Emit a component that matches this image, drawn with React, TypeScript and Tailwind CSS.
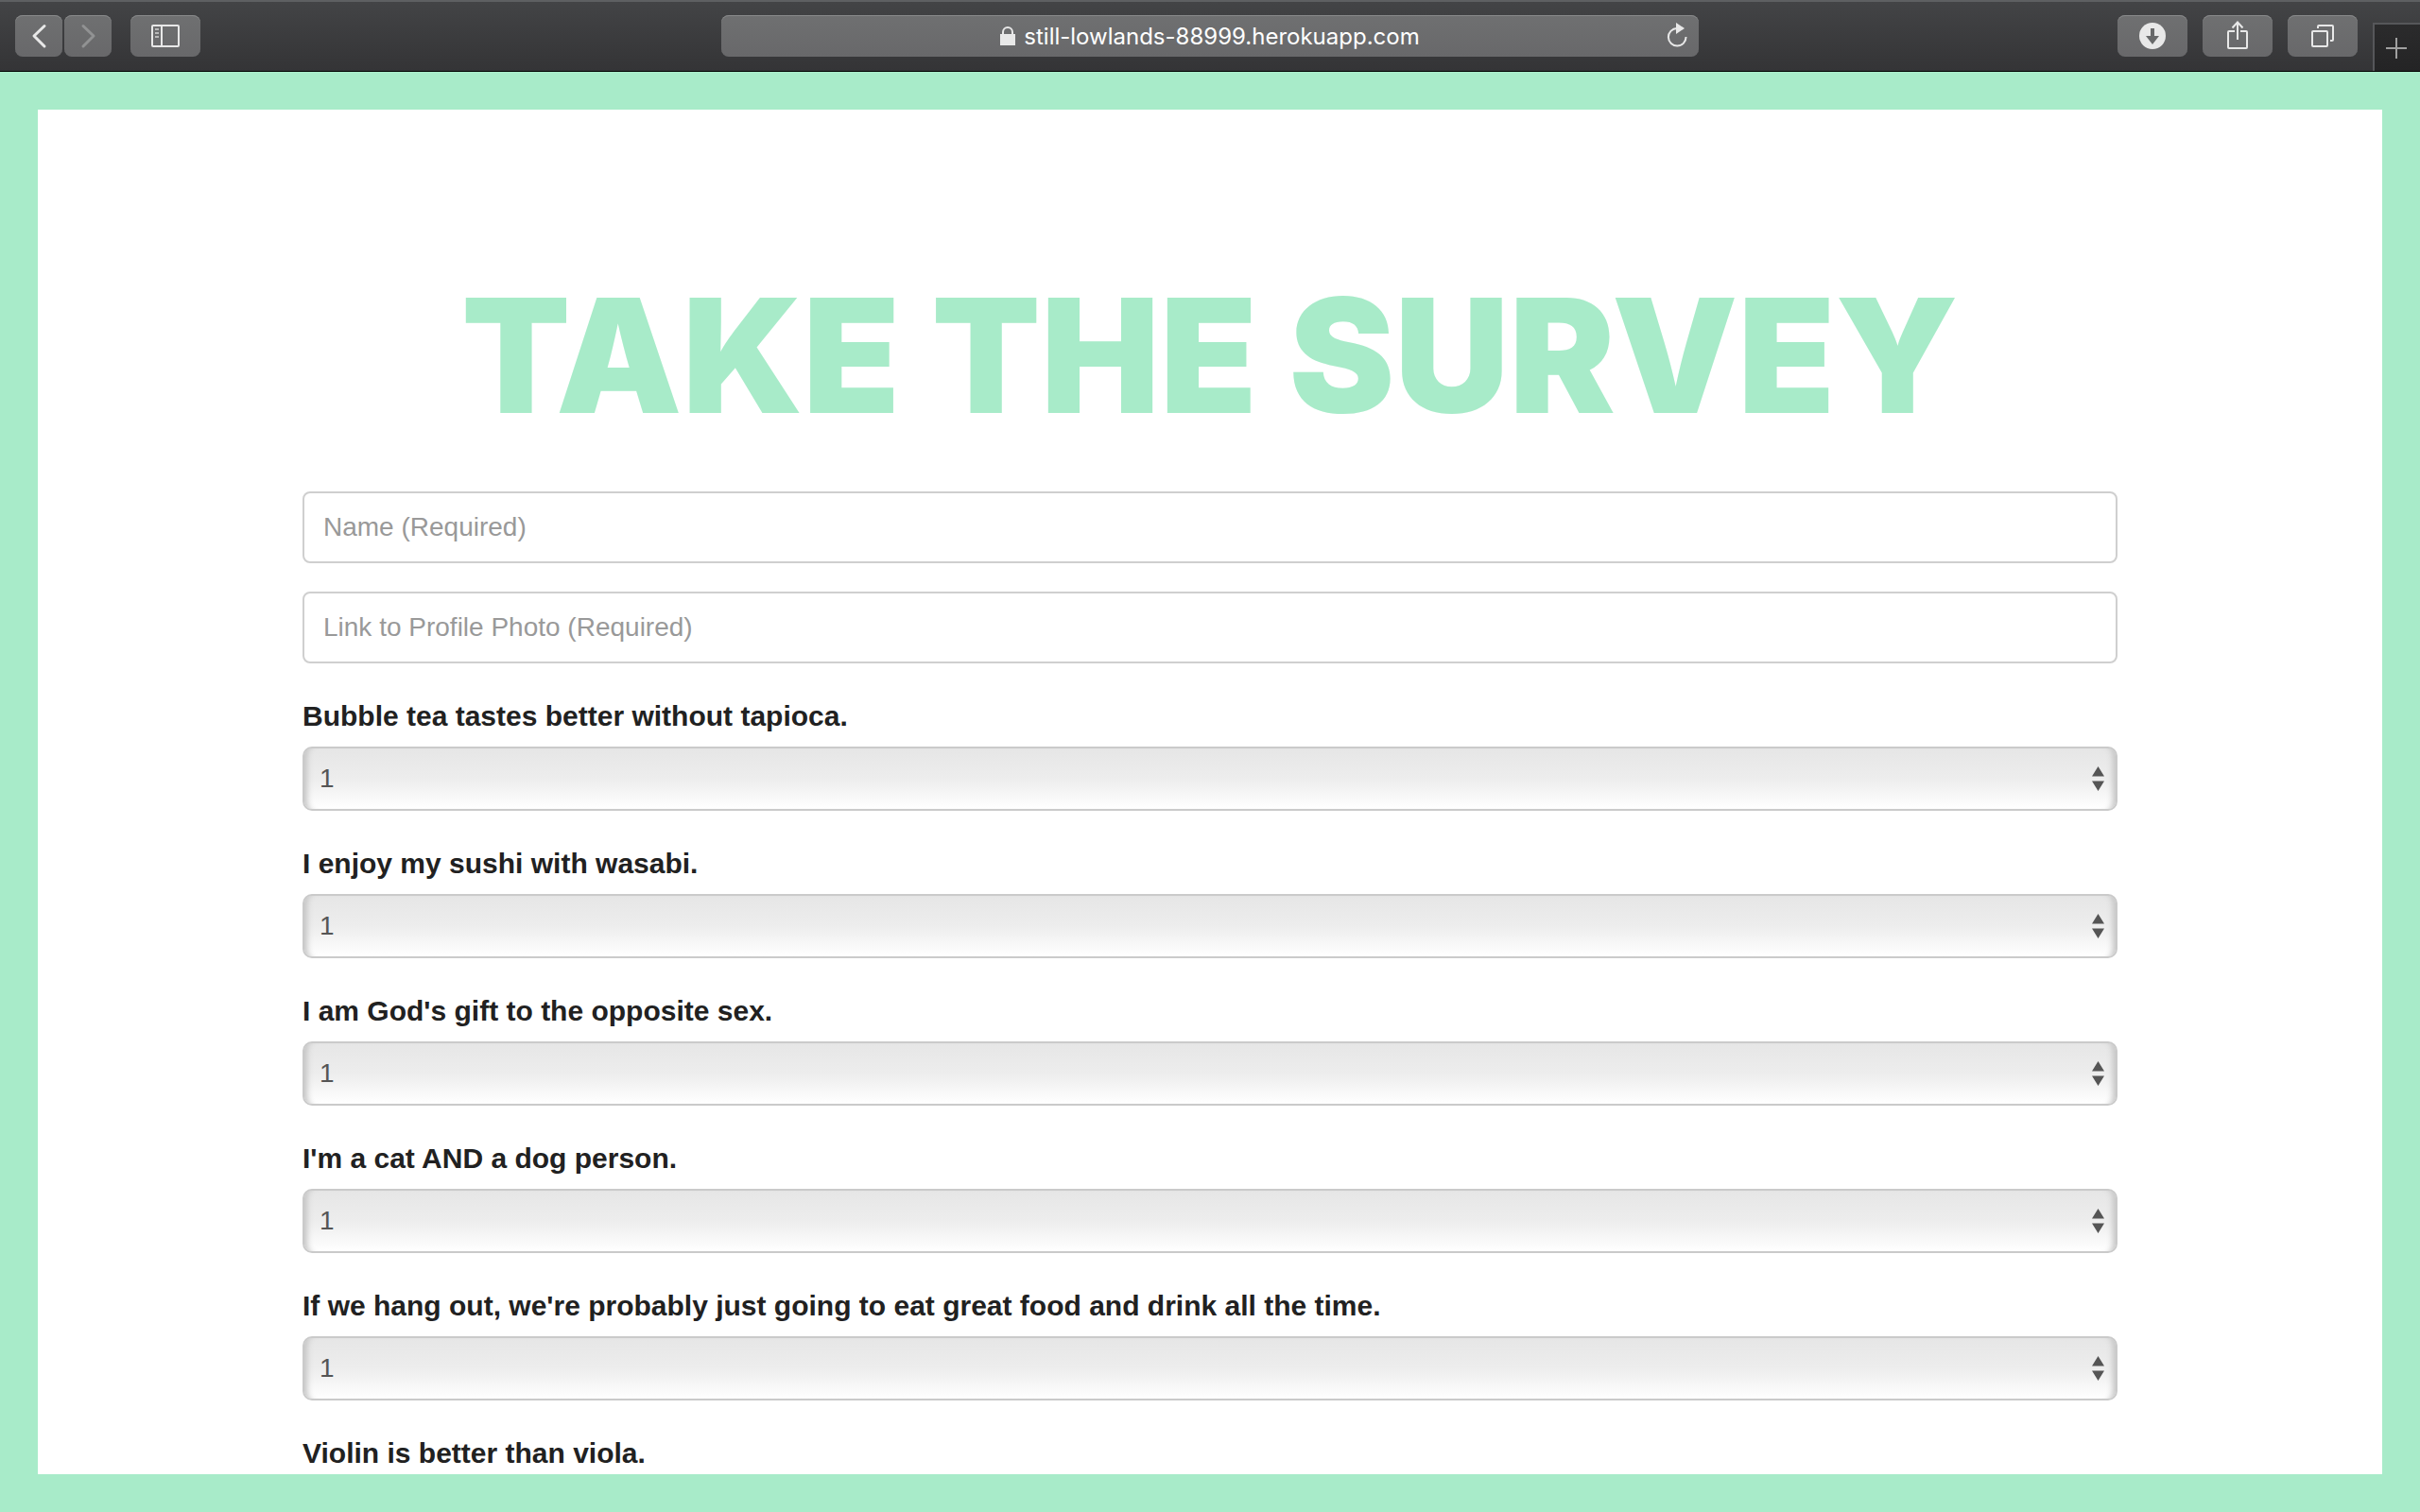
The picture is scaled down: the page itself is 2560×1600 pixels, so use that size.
import type { ReactNode } from "react";

const questions = [
  "Bubble tea tastes better without tapioca.",
  "I enjoy my sushi with wasabi.",
  "I am God's gift to the opposite sex.",
  "I'm a cat AND a dog person.",
  "If we hang out, we're probably just going to eat great food and drink all the time.",
  "Violin is better than viola.",
];

const scale = ["1", "2", "3", "4", "5"];

function ToolbarButton({ label, narrow, disabled, children }: { label: string; narrow?: boolean; disabled?: boolean; children: ReactNode }) {
  return (
    <button
      type="button"
      aria-label={label}
      disabled={disabled}
      className={`h-11 rounded-lg bg-linear-to-b from-[#6f7071] to-[#68686a] shadow-[inset_0_1px_0_#88898a] ${narrow ? "w-[50px]" : "w-[74px]"} ${disabled ? "text-[#919293]" : "text-[#e8e8e8]"}`}
    >
      <svg viewBox={narrow ? "0 0 50 44" : "0 0 74 44"} className="block h-11 w-full" fill="none" stroke="currentColor" strokeWidth="2" aria-hidden="true">
        {children}
      </svg>
    </button>
  );
}

function Toolbar() {
  return (
    <header className="flex h-[76px] shrink-0 border-t-2 border-b border-t-[#5e6062] border-b-black bg-linear-to-b from-[#434446] to-[#343436] font-[Inter,sans-serif]">
      <div className="flex flex-1 items-start">
        <div className="flex gap-5 pt-3.5 pl-4">
          <div className="flex gap-0.5">
            <ToolbarButton label="Back" narrow>
              <path d="M31 11.5 20 22 31 33" strokeWidth="3" strokeLinecap="round" strokeLinejoin="round" />
            </ToolbarButton>
            <ToolbarButton label="Forward" narrow disabled>
              <path d="M20 11.5 31 22 20 33" strokeWidth="3" strokeLinecap="round" strokeLinejoin="round" />
            </ToolbarButton>
          </div>
          <ToolbarButton label="Show sidebar">
            <rect x="23" y="11" width="28" height="22" rx="1" />
            <path d="M33 11v22" />
            <path d="M26 15h4M26 19h4M26 23h4" stroke="#b9b9b9" />
          </ToolbarButton>
        </div>
      </div>

      <div className="mt-3.5 flex h-11 w-[1034px] items-center rounded-lg bg-linear-to-b from-[#6f7071] to-[#68686a] pr-3 pl-[34px] shadow-[inset_0_1px_0_#88898a]">
        <div className="flex flex-1 items-center justify-center gap-[9px]">
          <svg viewBox="0 0 16 20" className="h-5 w-4 text-[#e8e8e8]" aria-hidden="true">
            <path d="M3 9V6a5 5 0 0 1 10 0v3" fill="none" stroke="currentColor" strokeWidth="2" />
            <path d="M0 8h16v12H0z" fill="currentColor" />
          </svg>
          <input
            aria-label="Address"
            defaultValue="still-lowlands-88999.herokuapp.com"
            className="field-sizing-content bg-transparent pt-0.5 text-[24px] leading-8 text-white outline-none"
          />
        </div>
        <button type="button" aria-label="Reload" className="text-[#e8e8e8]">
          <svg viewBox="0 0 22 28" className="block h-7 w-[22px]" aria-hidden="true">
            <path d="M11 6a9.3 9.3 0 1 0 9.5 9" fill="none" stroke="currentColor" strokeWidth="2" />
            <path d="M10 0v12l9-6z" fill="currentColor" />
          </svg>
        </button>
      </div>

      <div className="flex flex-1 items-start justify-end gap-4">
        <div className="flex gap-4 pt-3.5">
          <ToolbarButton label="Downloads">
            <circle cx="37" cy="22" r="14" fill="currentColor" stroke="none" />
            <path d="M35 14h4v8h5l-7 9-7-9h5z" fill="#68696a" stroke="none" />
          </ToolbarButton>
          <ToolbarButton label="Share">
            <path d="M34 17h-6a1 1 0 0 0-1 1v16a1 1 0 0 0 1 1h18a1 1 0 0 0 1-1V18a1 1 0 0 0-1-1h-6" />
            <path d="M37 26V7.500M31.500 13.500 37 7.500l5.500 6" />
          </ToolbarButton>
          <ToolbarButton label="Show all tabs">
            <rect x="26" y="17" width="16" height="16" rx="1" />
            <path d="M32 14v-2a1 1 0 0 1 1-1h14a1 1 0 0 1 1 1v14a1 1 0 0 1-1 1h-2" />
          </ToolbarButton>
        </div>
        <button
          type="button"
          aria-label="New tab"
          className="mt-[22px] h-[51px] w-[50px] border-t-2 border-l-2 border-[#56575a] bg-linear-to-b from-[#2b2b2c] to-[#242425] text-[#a0a0a0]"
        >
          <svg viewBox="0 0 48 49" className="block h-[49px] w-12" fill="none" stroke="currentColor" strokeWidth="2" aria-hidden="true">
            <path d="M12 25h22M23 14v22" />
          </svg>
        </button>
      </div>
    </header>
  );
}

function TextField({ name, label }: { name: string; label: string }) {
  return (
    <input
      name={name}
      aria-label={label}
      placeholder={label}
      required
      className="h-[76px] w-full rounded-lg border-2 border-[#cfcfcf] bg-white px-5 text-[28px] text-[#555] outline-none placeholder:text-[#999]"
    />
  );
}

function Question({ id, text }: { id: string; text: string }) {
  return (
    <div className="mt-9">
      <label htmlFor={id} className="mb-3 block text-[30px] leading-10 font-bold text-[#212121]">
        {text}
      </label>
      <div className="relative">
        <select
          id={id}
          name={id}
          className="block h-[68px] w-full appearance-none rounded-[10px] border-2 border-[#cacaca] bg-linear-to-b from-[#e6e6e6] via-[#ededed] to-white px-4 text-[28px] text-[#555] shadow-[inset_9px_0_6px_-6px_#c4c4c4,inset_-9px_0_6px_-6px_#c4c4c4] outline-none"
        >
          {scale.map((n) => (
            <option key={n}>{n}</option>
          ))}
        </select>
        <svg viewBox="0 0 13 26" className="pointer-events-none absolute top-[21px] right-3.5 h-[26px] w-[13px] text-[#555]" fill="currentColor" aria-hidden="true">
          <path d="M6.500 0l6.500 10.500H0zM0 15.500h13L6.500 26z" />
        </svg>
      </div>
    </div>
  );
}

export default function App() {
  return (
    <div className="flex h-screen flex-col bg-[#a8ebc9]">
      <Toolbar />
      <div className="min-h-0 flex-1 p-10">
        <main className="h-full overflow-y-auto bg-white font-['Liberation_Sans',Arial,sans-serif] [scrollbar-width:none]">
          <div className="mx-auto max-w-[1920px] pt-[176px] pb-10">
            <h1 className="mb-[60px] text-center font-[Inter,sans-serif] text-[168px] leading-[168px] font-black whitespace-nowrap text-[#a8ebc9]">
              TAKE THE SURVEY
            </h1>
            <form>
              <div className="flex flex-col gap-[30px]">
                <TextField name="name" label="Name (Required)" />
                <TextField name="photo" label="Link to Profile Photo (Required)" />
              </div>
              {questions.map((q, i) => (
                <Question key={q} id={`question-${i + 1}`} text={q} />
              ))}
            </form>
          </div>
        </main>
      </div>
    </div>
  );
}
